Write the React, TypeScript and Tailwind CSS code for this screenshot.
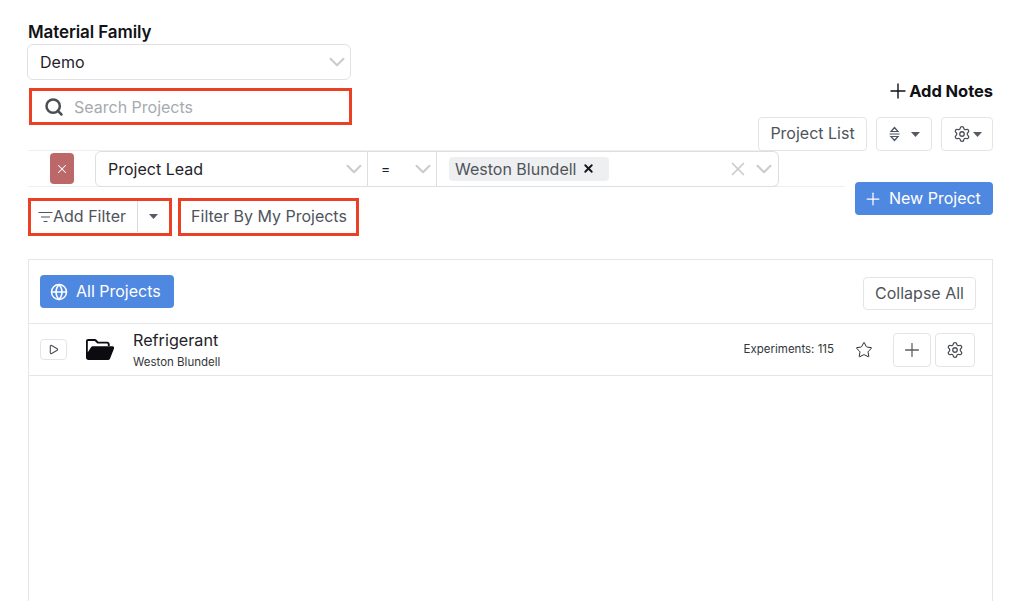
import React from "react";
import { ChevronDown, Search, X, Plus, Globe, Star, Settings, Play } from "lucide-react";

const Caret = ({ className = "" }: { className?: string }) => (
  <svg width="9" height="5" viewBox="0 0 9 5" className={className}>
    <path d="M0 0h9L4.500 5z" fill="#555b63" />
  </svg>
);

const FilterIcon = () => (
  <svg width="15" height="12" viewBox="0 0 15 12" fill="none" stroke="#4b5563" strokeWidth="1" className="shrink-0">
    <path d="M0.500 1.500h14M3 6h9M5.500 10.500h4" />
  </svg>
);

const SortIcon = () => (
  <svg width="11" height="16" viewBox="0 0 11 16" fill="none" stroke="#4b5563" strokeWidth="1.200">
    <path d="M2 5.500 5.500 1.500 9 5.500zM0.500 8h10M2 10.500 5.500 14.500 9 10.500z" />
  </svg>
);

const FolderOpen = () => (
  <svg width="30" height="23" viewBox="0 0 30 23">
    <path d="M1 3.200C1 1.900 2 1 3.200 1h6.600c.7 0 1.300.3 1.700.8l1.800 2h9c1.400 0 2.400 1 2.400 2.400V8h-1.900V6.300c0-.4-.3-.7-.7-.7H12.300L9.800 2.900H3.400c-.4 0-.6.300-.6.600v10.700L6 9.200C6.400 8.500 7 8.200 7.800 8.200h19.700c1.200 0 2 1.200 1.500 2.300l-4 10.300c-.4.800-1.100 1.200-2 1.200H3.500C2 22 1 21 1 19.600z" fill="#0b0b10" />
  </svg>
);

const Chevron = ({ className = "" }: { className?: string }) => (
  <ChevronDown size={26} color="#c9cbcf" strokeWidth={1.900} className={`shrink-0 ${className}`} />
);

export default function App() {
  return (
    <div className="h-[601px] w-[1024px] overflow-hidden bg-white pl-[28px] pr-[31px] font-['Inter','Liberation_Sans',sans-serif] text-[#1f2329]">
      <div className="flex h-[259px] items-start">
        <div className="flex w-[817px] shrink-0 flex-col">
          <div className="mt-[23px] text-[17px] font-semibold leading-[19px] tracking-[-0.1px] text-[#101216]">Material Family</div>
          <div className="-ml-px mt-[2px] flex h-[36px] w-[324px] items-center justify-between rounded-md border border-[#dfe1e4] pl-[12px] text-[16px]">
            <span>Demo</span>
            <Chevron />
          </div>
          <div className="ml-[1px] mt-[8px] flex h-[37px] w-[323px] items-center border-[3px] border-[#ea4026] pl-[12px]">
            <Search size={20} color="#4b4f55" strokeWidth={3} />
            <span className="ml-[10px] text-[16px] text-[#a7aaae]">Search Projects</span>
          </div>
          <div className="mt-[25px] flex h-[37px] items-center border-y border-[#eeeff0]">
            <div className="ml-[22px] flex h-[31px] w-[24px] items-center justify-center rounded-[4px] bg-[#bc6868]">
              <X size={14} color="#ffffff" strokeWidth={1.800} />
            </div>
            <div className="ml-[21px] flex h-[36px] w-[273px] items-center justify-between rounded-l-md border border-[#dcdee1] pl-[12px] text-[16px]">
              <span>Project Lead</span>
              <Chevron />
            </div>
            <div className="flex h-[36px] w-[69px] items-center justify-between border-y border-r border-[#dcdee1] pl-[13px] text-[14px]">
              <span>=</span>
              <Chevron />
            </div>
            <div className="flex h-[36px] w-[342px] items-center rounded-r-md border-y border-r border-[#dcdee1] pl-[12px]">
              <div className="flex h-[24px] w-[160px] items-center rounded-[4px] bg-[#eeeff0] pl-[6px] text-[16px] text-[#4f545b]">
                <span>Weston Blundell</span>
                <X size={13} color="#15171a" strokeWidth={3.500} className="ml-[6px]" />
              </div>
              <X size={22} color="#c9cbcf" strokeWidth={1.800} className="ml-auto" />
              <Chevron className="ml-[2px] mr-[1px]" />
            </div>
          </div>
          <div className="mt-[11px] flex gap-[6px]">
            <div className="flex h-[38px] w-[144px] items-center border-[3px] border-[#ea4026] pb-[1px] text-[16px] text-[#4f545b]">
              <div className="flex h-full w-[107px] items-center border-r border-[#d9dbde] pl-[7px]">
                <FilterIcon />
                <span className="pb-[2px]">Add Filter</span>
              </div>
              <div className="flex flex-1 justify-center">
                <Caret />
              </div>
            </div>
            <div className="flex h-[38px] w-[181px] items-center justify-center border-[3px] border-[#ea4026] pb-[2px] pl-[1px] text-[16px] text-[#4f545b]">
              Filter By My Projects
            </div>
          </div>
        </div>
        <div className="flex flex-1 flex-col items-end">
          <div className="mt-[81px] flex h-[20px] items-center text-[16.500px] font-bold tracking-[-0.05px] text-[#0f1114]">
            <Plus size={24} strokeWidth={1.400} color="#0f1114" className="-mr-px" />
            Add Notes
          </div>
        </div>
      </div>
      <div className="relative h-[342px] border border-b-0 border-[#e5e6e8]">
        <div className="flex h-[64px] items-start justify-between border-b border-[#e5e6e8] pl-[11px] pr-[16px]">
          <div className="mt-[15px] flex h-[33px] w-[134px] items-center rounded-[4px] bg-[#4f88e0] pl-[10px] text-[16px] text-white">
            <Globe size={18} color="#ffffff" />
            <span className="ml-[8px] pb-[2px]">All Projects</span>
          </div>
          <div className="mt-[17px] flex h-[33px] w-[113px] items-center justify-center rounded-[4px] border border-[#e3e4e6] pb-[2px] text-[16px] text-[#4f545b]">
            Collapse All
          </div>
        </div>
        <div className="flex h-[52px] items-center border-b border-[#e5e6e8] pl-[11px] pr-[17px]">
          <div className="flex h-[21px] w-[27px] items-center justify-center rounded-[4px] border border-[#e3e4e6]">
            <Play size={11} color="#4b4f55" strokeWidth={2.400} />
          </div>
          <div className="ml-[18px] flex w-[30px] justify-center">
            <FolderOpen />
          </div>
          <div className="ml-[18px] flex flex-col">
            <span className="text-[16.200px] leading-[20px] text-[#1f2329]">Refrigerant</span>
            <span className="mt-[5px] text-[11.500px] leading-[14px] text-[#33373c]">Weston Blundell</span>
          </div>
          <span className="ml-auto text-[11.500px] text-[#33373c]">Experiments: 115</span>
          <Star size={18} color="#1f2329" strokeWidth={1.300} className="ml-[21px]" />
          <div className="ml-[20px] flex h-[34px] w-[38px] items-center justify-center rounded-[4px] border border-[#e3e4e6]">
            <Plus size={22} color="#5a5f66" strokeWidth={1.400} />
          </div>
          <div className="ml-[4px] flex h-[34px] w-[40px] items-center justify-center rounded-[4px] border border-[#e3e4e6]">
            <Settings size={18} color="#4b4f55" strokeWidth={1.700} />
          </div>
        </div>
        <div className="absolute -right-px -top-[143px] flex items-center gap-[9px]">
          <div className="flex h-[34px] w-[109px] items-center justify-center rounded-[4px] border border-[#e3e4e6] bg-white pb-[2px] text-[16px] text-[#4f545b]">
            Project List
          </div>
          <div className="flex h-[34px] w-[56px] items-center justify-center gap-[11px] rounded-[4px] border border-[#e3e4e6]">
            <SortIcon />
            <Caret />
          </div>
          <div className="flex h-[34px] w-[52px] items-center justify-center gap-[2px] rounded-[4px] border border-[#e3e4e6]">
            <Settings size={18} color="#4b4f55" strokeWidth={1.700} />
            <Caret />
          </div>
        </div>
        <div className="absolute -right-px -top-[78px] flex h-[33px] w-[138px] items-center rounded-[4px] bg-[#4f88e0] pl-[8px] text-[16px] text-white">
          <Plus size={20} color="#ffffff" strokeWidth={1.500} />
          <span className="ml-[6px] pb-[2px]">New Project</span>
        </div>
      </div>
    </div>
  );
}
